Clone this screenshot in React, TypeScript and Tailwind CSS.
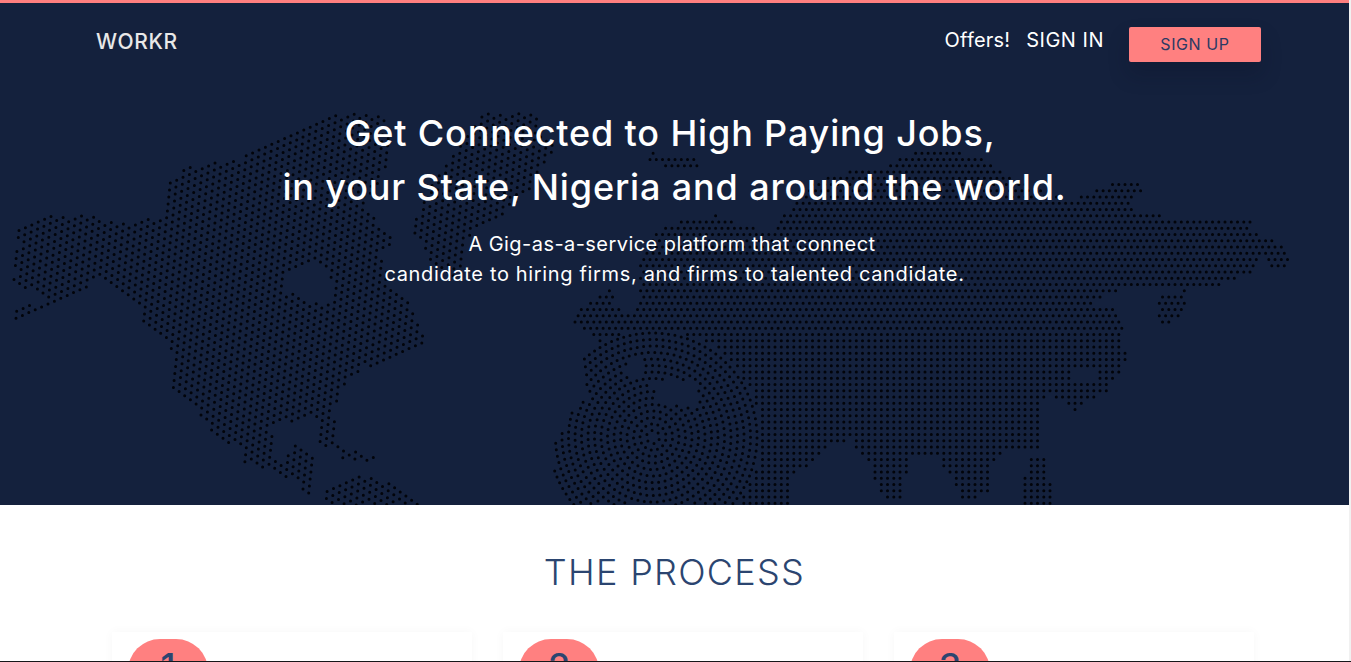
import { useMemo } from 'react';

type Pt = [number, number];

const FONT = { fontFamily: 'Inter, "Liberation Sans", sans-serif' };

const northAmerica: Pt[] = [
  [12, 232], [30, 220], [47, 215], [90, 215], [120, 223], [160, 217], [167, 205], [170, 182], [183, 168], [213, 162],
  [240, 160], [253, 148], [277, 140], [293, 128], [333, 115], [367, 113], [383, 117], [392, 150], [380, 185], [362, 205],
  [377, 220], [395, 242], [380, 250], [390, 282], [410, 303], [425, 337], [420, 348], [403, 355], [388, 360], [365, 368],
  [347, 382], [338, 402], [332, 415], [338, 432], [338, 448], [325, 450], [317, 447], [322, 425], [310, 418], [290, 422],
  [272, 427], [272, 452], [283, 462], [297, 443], [307, 448], [317, 463], [312, 468], [315, 492], [308, 495], [293, 480],
  [260, 468], [243, 462], [243, 448], [217, 438], [203, 418], [190, 402], [177, 395], [172, 387], [173, 358], [165, 338],
  [142, 320], [138, 305], [120, 290], [100, 278], [87, 288], [70, 300], [50, 303], [33, 315], [18, 321], [12, 317],
  [12, 312], [20, 308], [37, 303], [57, 300], [37, 293], [13, 285], [15, 273], [12, 258], [23, 242],
];
const hudsonBay: Pt[] = [[285, 272], [310, 263], [328, 270], [335, 300], [322, 303], [300, 298], [283, 288]];
const cuba: Pt[] = [[338, 462], [343, 445], [358, 452], [387, 458], [378, 462], [355, 460]];
const southAmerica: Pt[] = [[322, 493], [358, 475], [397, 485], [413, 497], [423, 505], [323, 505]];
const greenland: Pt[] = [
  [533, 113], [555, 150], [530, 190], [510, 210], [470, 235], [455, 285], [430, 262], [413, 230], [420, 205], [440, 170], [470, 130], [483, 113],
];
const scandinavia: Pt[] = [[648, 152], [693, 157], [703, 170], [670, 170], [650, 162]];
const eurasia: Pt[] = [
  [573, 325], [577, 313], [593, 298], [630, 277], [650, 237], [680, 220], [717, 215], [740, 223], [770, 233], [793, 203],
  [815, 180], [850, 172], [890, 165], [915, 150], [937, 147], [980, 157], [1007, 177], [1067, 200], [1093, 192], [1097, 185],
  [1137, 183], [1147, 190], [1130, 200], [1140, 213], [1173, 217], [1240, 220], [1250, 215], [1253, 230], [1283, 245], [1290, 267],
  [1273, 268], [1263, 257], [1250, 273], [1217, 287], [1180, 287], [1117, 290], [1093, 303], [1113, 308], [1123, 327], [1120, 347],
  [1130, 357], [1113, 380], [1107, 393], [1087, 403], [1075, 410], [1052, 397], [1063, 380], [1043, 403], [1043, 447], [1003, 450],
  [993, 467], [990, 493], [963, 503], [953, 480], [937, 457], [930, 453], [910, 457], [903, 487], [902, 500], [883, 502],
  [880, 490], [870, 477], [870, 462], [857, 452], [852, 440], [828, 447], [818, 458], [793, 475], [788, 485], [790, 505],
  [568, 505], [555, 480], [552, 443], [565, 425], [575, 405], [588, 397], [583, 382], [582, 360], [602, 345], [593, 337],
];
const holes: Pt[][] = [
  [[627, 358], [643, 358], [643, 378], [627, 380]],
  [[650, 380], [697, 380], [700, 405], [660, 405]],
  [[612, 282], [640, 270], [637, 312], [615, 308]],
  [[1070, 370], [1100, 367], [1098, 383], [1072, 384]],
];
const japan: Pt[] = [[1157, 297], [1185, 290], [1188, 303], [1180, 318], [1165, 327], [1157, 325]];
const indonesia: Pt[] = [[1030, 457], [1043, 457], [1057, 500], [1055, 505], [1023, 505], [1022, 487]];

function inside(x: number, y: number, poly: Pt[]) {
  let hit = false;
  for (let i = 0, j = poly.length - 1; i < poly.length; j = i++) {
    const [xi, yi] = poly[i];
    const [xj, yj] = poly[j];
    if (yi > y !== yj > y && x < ((xj - xi) * (y - yi)) / (yj - yi) + xi) hit = !hit;
  }
  return hit;
}

// old world: rings around Africa, plain rows further out
function oldWorldDots() {
  const cx = 653;
  const cy = 437;
  const gap = 6.5;
  const rings = 16;
  const dots: Pt[] = [];
  const inOld = (x: number, y: number) =>
    (inside(x, y, eurasia) && !holes.some((h) => inside(x, y, h))) ||
    inside(x, y, scandinavia) ||
    inside(x, y, japan) ||
    inside(x, y, indonesia);
  for (let k = 1; k <= rings; k++) {
    const r = k * gap;
    const n = Math.round((2 * Math.PI * r) / 6.5);
    for (let i = 0; i < n; i++) {
      const a = (i / n) * Math.PI * 2 + k * 0.37;
      const x = cx + r * Math.cos(a);
      const y = cy + r * Math.sin(a);
      if (inOld(x, y)) dots.push([x, y]);
    }
  }
  let row = 0;
  for (let y = 147; y < 506; y += 6.25) {
    const shift = y < 330 && row % 2 ? 3.1 : 0;
    for (let x = 550 + shift; x < 1295; x += 6.25) {
      if (Math.hypot(x - cx, y - cy) >= rings * gap + 4 && inOld(x, y)) dots.push([x, y]);
    }
    row++;
  }
  return dots;
}

// new world: a hex grid turned a little
function newWorldDots() {
  const dots: Pt[] = [];
  const step = 7;
  const rot = -0.42;
  const c = Math.cos(rot);
  const s = Math.sin(rot);
  for (let v = -120; v < 120; v++) {
    for (let u = -120; u < 120; u++) {
      const gx = (u + (v % 2 ? 0.5 : 0)) * step;
      const gy = v * step * 0.866;
      const x = 280 + gx * c - gy * s;
      const y = 300 + gx * s + gy * c;
      const land =
        (inside(x, y, northAmerica) && !inside(x, y, hudsonBay)) ||
        inside(x, y, cuba) ||
        inside(x, y, southAmerica) ||
        inside(x, y, greenland);
      if (land) dots.push([x, y]);
    }
  }
  return dots;
}

function DottedMap() {
  const d = useMemo(
    () =>
      [...newWorldDots(), ...oldWorldDots()]
        .map(([x, y]) => `M${x.toFixed(1)} ${y.toFixed(1)}h.01`)
        .join(''),
    [],
  );
  return (
    <svg className="absolute left-0 top-0 h-[502px] w-[1349px]" viewBox="0 3 1349 502">
      <path d={d} stroke="#02040a" strokeWidth="3" strokeLinecap="round" fill="none" />
    </svg>
  );
}

const steps = ['1', '2', '3'];

export default function App() {
  return (
    <div className="flex h-screen flex-col overflow-hidden border-b border-[#16161a] bg-white" style={FONT}>
      <div className="flex min-h-0 flex-1 flex-col overflow-hidden border-r-2 border-[#f1f1f1]">
        <div className="h-[3px] shrink-0 bg-[#ff7f7f]" />

        {/* Hero */}
        <section className="relative h-[502px] shrink-0 overflow-hidden bg-[#14213d] text-white">
          <DottedMap />
          <div className="relative">
            <nav className="flex items-start justify-between pl-[96px] pr-[88px] pt-[24px]">
              <a className="text-[21px] font-medium leading-[30px] tracking-[0.6px] text-[#e8e8e8]">WORKR</a>
              <div className="flex items-start">
                <a className="text-[20px] font-normal leading-[26px] tracking-[0.2px]">Offers!</a>
                <a className="ml-[16px] text-[20px] font-normal leading-[26px] tracking-[0.5px]">SIGN IN</a>
                <button className="ml-[25px] flex h-[35px] w-[132px] items-center justify-center rounded-[2px] bg-[#ff8080] pb-[2px] text-[16px] tracking-[0.6px] text-[#2b3a63] shadow-[0_12px_20px_rgba(10,15,35,0.25)]">
                  SIGN UP
                </button>
              </div>
            </nav>

            <h1 className="mt-[44px] text-center text-[36px] font-medium leading-[54px] tracking-[0.85px]">
              <span className="block pr-[9px]">Get Connected to High Paying Jobs,</span>
              <span className="block">in your State, Nigeria and around the world.</span>
            </h1>
            <p className="mt-[15px] text-center text-[20px] font-normal leading-[30px] tracking-[0.66px]">
              <span className="block pr-[5px] tracking-[0.44px]">A Gig-as-a-service platform that connect</span>
              <span className="block">candidate to hiring firms, and firms to talented candidate.</span>
            </p>
          </div>
        </section>

        {/* Process */}
        <section className="min-h-0 flex-1">
          <h2 className="mt-[44px] text-center text-[36px] font-light leading-[46px] tracking-[1.3px] text-[#2b4570]">
            THE PROCESS
          </h2>
          <div className="mt-[37px] flex gap-[31px] pl-[112px]">
            {steps.map((n) => (
              <div key={n} className="h-[200px] w-[360px] px-[16px] pt-[7px] shadow-[0_0_10px_rgba(0,0,0,0.035)]">
                <div className="flex h-[80px] w-[80px] justify-center rounded-[32px] bg-[#ff8080] pt-[9px] text-[36px] font-medium leading-[36px] text-[#2b4570]">
                  {n}
                </div>
              </div>
            ))}
          </div>
        </section>
      </div>
    </div>
  );
}
